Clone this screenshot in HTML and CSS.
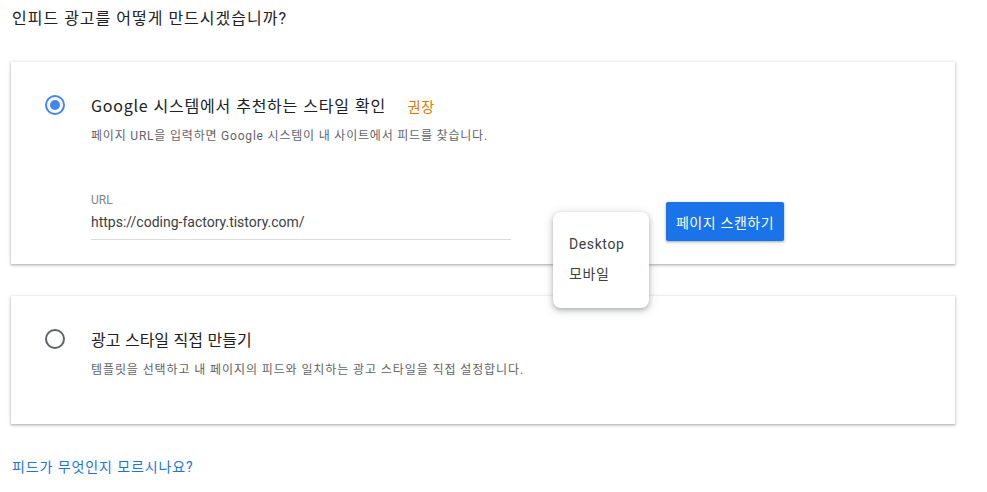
FILE: index.html
```html
<!DOCTYPE html>
<html lang="ko">
<head>
<meta charset="utf-8">
<link rel="stylesheet" href="styles.css">
</head>
<body>
<div class="page">
  <h1 class="question">인피드 광고를 어떻게 만드시겠습니까?</h1>

  <div class="card card-first">
    <div class="option">
      <span class="radio radio-on"><span class="dot"></span></span>
      <div class="content">
        <div class="title title-wide">Google 시스템에서 추천하는 스타일 확인<span class="badge">권장</span></div>
        <div class="desc">페이지 URL을 입력하면 Google 시스템이 내 사이트에서 피드를 찾습니다.</div>
        <div class="field-row">
          <div class="field">
            <div class="label">URL</div>
            <div class="input">https://coding-factory.tistory.com/</div>
          </div>
          <button class="scan">페이지 스캔하기</button>
        </div>
      </div>
    </div>
    <div class="menu">
      <div class="menu-item">Desktop</div>
      <div class="menu-item">모바일</div>
    </div>
  </div>

  <div class="card card-second">
    <div class="option">
      <span class="radio"></span>
      <div class="content">
        <div class="title">광고 스타일 직접 만들기</div>
        <div class="desc desc-second">템플릿을 선택하고 내 페이지의 피드와 일치하는 광고 스타일을 직접 설정합니다.</div>
      </div>
    </div>
  </div>

  <a class="help" href="#">피드가 무엇인지 모르시나요?</a>
</div>
</body>
</html>
```

FILE: styles.css
```css
* { box-sizing: border-box; }
html, body { margin: 0; padding: 0; background: #fff; }
body {
  font-family: Roboto, "Noto Sans CJK KR", sans-serif;
  color: #202124;
}
.page {
  padding: 0 32px 0 11px;
  width: 987px;
}
.question {
  margin: 0;
  padding: 8px 0 0 1px;
  height: 62px;
  font-size: 16px;
  line-height: 22px;
  font-weight: 400;
  letter-spacing: 1px;
  color: #202124;
}
.card {
  position: relative;
  width: 944px;
  background: #fff;
  box-shadow: 0 1px 2px rgba(60,64,67,0.3), 0 1px 3px 1px rgba(60,64,67,0.15);
}
.card-first { height: 202px; padding-top: 33px; }
.card-second { margin-top: 32px; height: 128px; padding-top: 33px; }
.option { display: flex; align-items: flex-start; padding-left: 34px; }
.radio {
  flex: none;
  width: 20px;
  height: 20px;
  border: 2px solid #5f6368;
  border-radius: 50%;
  display: flex;
  align-items: center;
  justify-content: center;
}
.radio-on { border-color: #4285f4; }
.dot { width: 10px; height: 10px; border-radius: 50%; background: #4285f4; }
.content { margin-left: 26px; }
.title {
  font-size: 16px;
  line-height: 20px;
  color: #202124;
  font-family: "Noto Sans CJK KR", sans-serif;
}
.title-wide { letter-spacing: 0.75px; }
.badge { color: #e37400; font-size: 14px; margin-left: 22px; letter-spacing: 0.5px; }
.desc {
  margin-top: 11px;
  font-size: 12px;
  line-height: 18px;
  letter-spacing: 0.8px;
  color: #5f6368;
}
.desc-second { margin-top: 12px; letter-spacing: 0.9px; }
.field-row { display: flex; align-items: flex-end; margin-top: 46px; }
.field { width: 420px; border-bottom: 1px solid #dadce0; padding-bottom: 8px; }
.label { padding-top: 2px; font-size: 12px; line-height: 14px; color: #80868b; }
.input { margin-top: 6px; font-size: 14px; line-height: 18px; color: #3c4043; }
.scan {
  margin-left: 155px;
  height: 39px;
  width: 118px;
  margin-bottom: -1px;
  border: none;
  border-radius: 2px;
  background: #1a73e8;
  color: #fff;
  font-family: "Noto Sans CJK KR", sans-serif;
  font-size: 14px;
  letter-spacing: 0.5px;
  padding: 0;
  box-shadow: 0 1px 2px rgba(60,64,67,0.3), 0 1px 3px 1px rgba(60,64,67,0.15);
}
.menu {
  position: absolute;
  left: 542px;
  top: 150px;
  width: 96px;
  height: 96px;
  background: #fff;
  border-radius: 8px;
  box-shadow: 0 2px 4px rgba(60,64,67,0.3), 0 2px 8px 2px rgba(60,64,67,0.15);
  padding-top: 17px;
  z-index: 2;
}
.menu-item {
  padding-left: 16px;
  font-size: 14px;
  line-height: 30px;
  letter-spacing: 0.6px;
  color: #3c4043;
}
.help {
  display: block;
  margin-top: 34px;
  padding-left: 1px;
  font-size: 14px;
  line-height: 18px;
  letter-spacing: 0.9px;
  color: #1a73e8;
  text-decoration: none;
}
```
